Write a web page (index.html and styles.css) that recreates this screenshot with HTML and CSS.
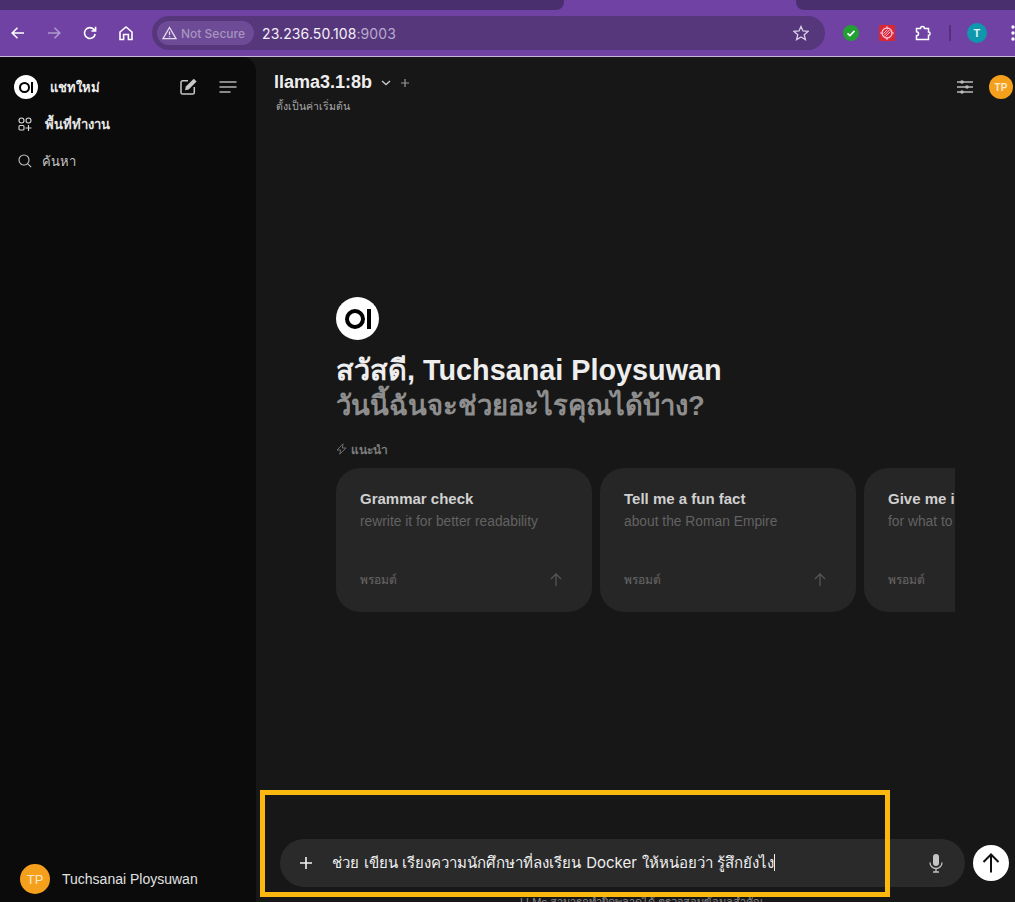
FILE: index.html
```html
<!DOCTYPE html>
<html lang="th">
<head>
    <meta charset="utf-8">
    <title>Open WebUI</title>
    <link rel="stylesheet" href="styles.css">
</head>
<body>
<div class="tabstrip">
    <div class="tabslot tabslot-left"></div>
    <div class="tabslot tabslot-right"></div>
</div>
<div class="toolbar">
    <button class="navbtn">
        <svg width="18" height="18" viewBox="0 0 18 18"><path d="M15 9H3.500M8.500 3.800 3.200 9l5.300 5.200" class="ic"/></svg>
    </button>
    <button class="navbtn navbtn-off">
        <svg width="18" height="18" viewBox="0 0 18 18"><path d="M3 9h11.500M9.500 3.800 14.800 9l-5.300 5.200" class="ic"/></svg>
    </button>
    <button class="navbtn">
        <svg width="18" height="18" viewBox="0 0 18 18"><path d="M14.200 10a5.400 5.400 0 1 1-1.300-4.600L14.600 7M14.600 2.800V7h-4.200" class="ic"/></svg>
    </button>
    <button class="navbtn">
        <svg width="18" height="18" viewBox="0 0 18 18"><path d="M3 15.500V8l6-5 6 5v7.500h-3.600v-5H6.600v5z" class="ic"/></svg>
    </button>
    <div class="omnibox">
        <div class="secure-chip">
            <svg width="15" height="14" viewBox="0 0 15 14"><path d="M7.500 1.500 14 12.600H1zM7.500 5.500v3.600M7.500 10.200v1" fill="none" stroke="#e6dcf2" stroke-width="1.300"/></svg>
            <span>Not Secure</span>
        </div>
        <div class="url">23.236.50.108<span class="url-port">:9003</span></div>
        <svg class="star" width="16" height="16" viewBox="0 0 16 16"><path d="m8 1.400 2 4.600 5 .4-3.800 3.300 1.200 4.900L8 12l-4.400 2.600 1.200-4.900L1 6.400l5-.4z" fill="none" stroke="#d9cde8" stroke-width="1.300"/></svg>
    </div>
    <div class="extensions">
        <svg width="16" height="16" viewBox="0 0 16 16"><circle cx="8" cy="8" r="8" fill="#23a033"/><path d="m4.500 8.300 2.400 2.300 4.600-4.700" fill="none" stroke="#fff" stroke-width="1.600"/></svg>
        <svg width="16" height="16" viewBox="0 0 16 16"><rect width="16" height="16" rx="1.500" fill="#d9282f"/><circle cx="8" cy="8" r="5" fill="none" stroke="#fbd" stroke-width="1.300"/><path d="M5 10.500 10.500 5M6.500 11.500l5-5M4.500 8.500l4-4M8 1v3M8 12v3M1 8h3M12 8h3" stroke="#fbd" stroke-width="1"/></svg>
        <svg width="17" height="17" viewBox="0 0 17 17"><path d="M1.500 3.500h4a2 2 0 0 1 4 0h4v3.600a1.600 1.600 0 0 1 0 3.200v4.200h-12v-3.700a2 2 0 0 0 0-4z" fill="none" stroke="#fff" stroke-width="1.500"/></svg>
        <div class="ext-divider"></div>
        <div class="profile-dot">T</div>
        <svg class="dots" width="4" height="16" viewBox="0 0 4 16"><circle cx="2" cy="2" r="1.700" fill="#fff"/><circle cx="2" cy="8" r="1.700" fill="#fff"/><circle cx="2" cy="14" r="1.700" fill="#fff"/></svg>
    </div>
</div>
<div class="app">
    <aside class="sidebar">
        <div class="side-top">
            <div class="logo-small"><span class="oi-o"></span><span class="oi-i"></span></div>
            <span class="newchat">แชทใหม่</span>
            <svg class="side-ic" width="18" height="18" viewBox="0 0 18 18"><path d="M9 2.700H3.600A1.600 1.600 0 0 0 2 4.300v10.100A1.600 1.600 0 0 0 3.600 16h10.100a1.600 1.600 0 0 0 1.600-1.600V9" fill="none" stroke="#c8c8c8" stroke-width="1.500"/><path d="M14.800 .8 17.600 3.600 9.700 11.500l-3.700.8.800-3.700z" fill="#c8c8c8"/></svg>
            <svg class="side-ic side-ic-last" width="18" height="14" viewBox="0 0 18 14"><path d="M1 2h16M1 7h16M1 12h10" fill="none" stroke="#b4b4b4" stroke-width="1.500" stroke-linecap="round"/></svg>
        </div>
        <div class="side-item side-workspace">
            <svg width="14" height="14" viewBox="0 0 14 14"><g fill="none" stroke="#d8d8d8" stroke-width="1.100"><circle cx="3.500" cy="3.500" r="2.500"/><circle cx="10.500" cy="3.500" r="2.500"/><rect x="1" y="8.500" width="5" height="4.500" rx="1"/><path d="M10.500 8v6M7.500 11h6"/></g></svg>
            <span>พื้นที่ทำงาน</span>
        </div>
        <div class="side-item side-search">
            <svg width="14" height="14" viewBox="0 0 14 14"><circle cx="6" cy="6" r="5" fill="none" stroke="#c4c4c4" stroke-width="1.100"/><path d="m9.800 9.800 3.400 3.400" stroke="#c4c4c4" stroke-width="1.100"/></svg>
            <span>ค้นหา</span>
        </div>
        <div class="side-user">
            <div class="avatar avatar-big">TP</div>
            <span>Tuchsanai Ploysuwan</span>
        </div>
    </aside>
    <main class="chat">
        <header class="chat-head">
            <div class="model">
                <div class="model-row">
                    <span class="model-name">llama3.1:8b</span>
                    <svg width="10" height="6" viewBox="0 0 10 6"><path d="m1 1 4 3.600L9 1" fill="none" stroke="#ccc" stroke-width="1.300"/></svg>
                    <svg class="model-plus" width="8" height="8" viewBox="0 0 8 8"><path d="M4 0v8M0 4h8" stroke="#999" stroke-width="1.200"/></svg>
                </div>
                <div class="model-default">ตั้งเป็นค่าเริ่มต้น</div>
            </div>
            <svg class="head-sliders" width="16" height="14" viewBox="0 0 16 14"><g stroke="#bbb" stroke-width="1.300"><path d="M0 2h16M0 7h16M0 12h16"/></g><g fill="#bbb"><circle cx="5" cy="2" r="1.800"/><circle cx="10" cy="7" r="1.800"/><circle cx="5" cy="12" r="1.800"/></g></svg>
            <div class="avatar avatar-head">TP</div>
        </header>
        <section class="hero">
            <div class="logo-big"><span class="oi-o"></span><span class="oi-i"></span></div>
            <h1 class="hello">สวัสดี, Tuchsanai Ploysuwan</h1>
            <div class="hello-sub">วันนี้ฉันจะช่วยอะไรคุณได้บ้าง?</div>
            <div class="suggest-label">
                <svg width="11" height="12" viewBox="0 0 11 12"><path d="M7 .8 1 7h3.600L3.800 11.200 10 5H6.400z" fill="none" stroke="#6e6e6e" stroke-width="1"/></svg>
                <span>แนะนำ</span>
            </div>
            <div class="cards">
                <div class="card">
                    <div class="card-title">Grammar check</div>
                    <div class="card-sub">rewrite it for better readability</div>
                    <div class="card-foot">
                        <span>พรอมต์</span>
                        <svg width="12" height="13" viewBox="0 0 12 13"><path d="M6 13V1M1 6l5-5 5 5" fill="none" stroke="#555" stroke-width="1.300"/></svg>
                    </div>
                </div>
                <div class="card">
                    <div class="card-title">Tell me a fun fact</div>
                    <div class="card-sub">about the Roman Empire</div>
                    <div class="card-foot">
                        <span>พรอมต์</span>
                        <svg width="12" height="13" viewBox="0 0 12 13"><path d="M6 13V1M1 6l5-5 5 5" fill="none" stroke="#555" stroke-width="1.300"/></svg>
                    </div>
                </div>
                <div class="card">
                    <div class="card-title">Give me ideas</div>
                    <div class="card-sub">for what to do with my kids' art</div>
                    <div class="card-foot">
                        <span>พรอมต์</span>
                        <svg width="12" height="13" viewBox="0 0 12 13"><path d="M6 13V1M1 6l5-5 5 5" fill="none" stroke="#555" stroke-width="1.300"/></svg>
                    </div>
                </div>
            </div>
        </section>
        <div class="composer">
            <div class="inputbar">
                <svg width="12" height="12" viewBox="0 0 12 12"><path d="M6 0v12M0 6h12" stroke="#f2f2f2" stroke-width="1.600"/></svg>
                <div class="inputtext">ช่วย เขียน เรียงความนักศึกษาที่ลงเรียน Docker ให้หน่อยว่า รู้สึกยังไง<span class="caret"></span></div>
                <svg width="14" height="19" viewBox="0 0 14 19"><rect x="4" y="0" width="6" height="12" rx="3" fill="#c4c4c4"/><path d="M1 8.500a6 6 0 0 0 12 0M7 14.500V18M4 18h6" fill="none" stroke="#c4c4c4" stroke-width="1.300"/></svg>
            </div>
            <button class="sendbtn">
                <svg width="18" height="20" viewBox="0 0 18 20"><path d="M9 19.500V1.500M1.500 9 9 1.500 16.500 9" fill="none" stroke="#111" stroke-width="2"/></svg>
            </button>
        </div>
        <div class="disclaimer">LLMs สามารถทำผิดพลาดได้ ตรวจสอบข้อมูลสำคัญ</div>
    </main>
</div>
<div class="highlight"></div>
</body>
</html>
```

FILE: styles.css
```css
* {
    box-sizing: border-box;
}

html, body {
    margin: 0;
    height: 902px;
    overflow: hidden;
}

body {
    display: flex;
    flex-direction: column;
    position: relative;
    background-color: #171717;
    font-family: Inter, "Noto Sans", "Liberation Sans", "DejaVu Sans", sans-serif;
    color: #eee;
}

button {
    border: 0;
    padding: 0;
    background: none;
}

/* browser chrome */
.tabstrip {
    height: 10px;
    background-color: #6f42a4;
    display: flex;
}

.tabslot {
    height: 10px;
    background-color: #4a2f6e;
}

.tabslot-left {
    width: 564px;
    border-bottom-right-radius: 8px;
}

.tabslot-right {
    width: 219px;
    margin-left: 232px;
    border-bottom-left-radius: 8px;
}

.toolbar {
    height: 47px;
    display: flex;
    align-items: center;
    background-color: #6f42a4;
    border-bottom: 1px solid #c9b8dc;
    padding-left: 9px;
}

.navbtn {
    width: 18px;
    height: 18px;
    margin-right: 18px;
    display: flex;
}

.navbtn-off {
    opacity: 0.45;
}

.ic {
    fill: none;
    stroke: #fff;
    stroke-width: 1.600;
}

.omnibox {
    width: 676px;
    height: 34px;
    margin-left: -1px;
    padding: 0 16px 0 5px;
    border-radius: 17px;
    background-color: #56377c;
    display: flex;
    align-items: center;
}

.secure-chip {
    height: 24px;
    padding: 0 9px 0 5px;
    border-radius: 12px;
    background-color: #6d4b96;
    display: flex;
    align-items: center;
    gap: 4px;
    font-size: 12px;
    font-weight: 500;
    color: #a795bf;
}

.url {
    margin-left: 8px;
    font-size: 14px;
    letter-spacing: 0.1px;
    color: #f4eff9;
    flex: 1;
}

.url-port {
    color: #b9a9cd;
}

.extensions {
    display: flex;
    align-items: center;
    margin-left: 18px;
}

.extensions > svg {
    margin-right: 20px;
}

.ext-divider {
    width: 2px;
    height: 16px;
    margin-left: -3px;
    background-color: #54307f;
    margin-right: 16px;
}

.profile-dot {
    width: 20px;
    height: 20px;
    border-radius: 50%;
    background-color: #0f97ad;
    color: #e5fbff;
    font-size: 11px;
    font-weight: 600;
    display: flex;
    align-items: center;
    justify-content: center;
    margin-right: 24px;
}

.extensions > .dots {
    margin-right: 0;
}

/* app */
.app {
    flex: 1;
    min-height: 0;
    display: flex;
    font-family: "Liberation Sans", "Noto Sans", "DejaVu Sans", sans-serif;
}

.sidebar {
    width: 256px;
    flex: none;
    background-color: #0b0b0b;
    border-top-right-radius: 14px;
    display: flex;
    flex-direction: column;
    padding: 18px 0 0 14px;
}

.side-top {
    display: flex;
    align-items: center;
    height: 24px;
}

.logo-small, .logo-big {
    background-color: #fff;
    border-radius: 50%;
    display: flex;
    align-items: center;
    justify-content: center;
}

.logo-small {
    width: 24px;
    height: 24px;
    gap: 1.500px;
}

.logo-small .oi-o {
    width: 11px;
    height: 11px;
    border: 2.500px solid #000;
    border-radius: 50%;
}

.logo-small .oi-i {
    width: 2px;
    height: 11px;
    background-color: #000;
}

.newchat {
    margin-left: 12px;
    font-size: 13px;
    font-weight: 700;
    color: #eee;
    flex: 1;
}

.side-ic {
    margin-right: 22px;
}

.side-ic-last {
    margin-right: 19px;
}

.side-item {
    display: flex;
    align-items: center;
}

.side-workspace {
    margin: 13px 0 0 4px;
    gap: 13px;
    font-size: 13px;
    font-weight: 700;
    color: #e6e6e6;
    height: 24px;
}

.side-search {
    margin: 13px 0 0 4px;
    gap: 10px;
    font-size: 13px;
    color: #c4c4c4;
    height: 24px;
}

.side-user {
    margin-top: auto;
    margin-bottom: 8px;
    margin-left: 6px;
    display: flex;
    align-items: center;
    gap: 12px;
    font-size: 14px;
    color: #e0e0e0;
}

.avatar {
    border-radius: 50%;
    background-color: #f5a01c;
    color: #fde9c9;
    display: flex;
    align-items: center;
    justify-content: center;
    font-weight: 500;
}

.avatar-big {
    width: 30px;
    height: 30px;
    font-size: 13px;
}

.avatar-head {
    width: 24px;
    height: 24px;
    font-size: 10px;
    font-weight: 700;
    margin: 3px 0 0 16px;
}

.chat {
    flex: 1;
    min-width: 0;
    display: flex;
    flex-direction: column;
    background-color: #171717;
}

.chat-head {
    flex: none;
    display: flex;
    align-items: flex-start;
    padding: 15px 2px 0 18px;
    height: 60px;
}

.head-sliders {
    margin-top: 8px;
}

.model {
    flex: 1;
}

.model-row {
    display: flex;
    align-items: center;
    gap: 9px;
}

.model-name {
    font-size: 18px;
    font-weight: 700;
    color: #eee;
}

.model-row svg.model-plus {
    margin-left: 1px;
}

.model-default {
    font-size: 10.500px;
    color: #aaa;
    margin: 5px 0 0 2px;
}

.hero {
    flex: none;
    padding-left: 80px;
    margin-top: 180px;
    height: 542px;
    overflow: hidden;
}

.logo-big {
    width: 43px;
    height: 43px;
    gap: 2.500px;
}

.logo-big .oi-o {
    width: 20px;
    height: 20px;
    border: 4px solid #000;
    border-radius: 50%;
}

.logo-big .oi-i {
    width: 3.500px;
    height: 20px;
    background-color: #000;
}

.hello {
    margin: 12px 0 0;
    font-size: 28.800px;
    font-weight: 700;
    line-height: 36px;
    color: #eee;
}

.hello-sub {
    font-size: 27.400px;
    font-weight: 700;
    line-height: 36px;
    color: #8e8e8e;
}

.suggest-label {
    margin-top: 16px;
    display: flex;
    align-items: center;
    gap: 4px;
    font-size: 12px;
    font-weight: 700;
    color: #7c7c7c;
    height: 18px;
}

.cards {
    margin-top: 10px;
    width: 619px;
    display: flex;
    gap: 8px;
    overflow: hidden;
}

.card {
    flex: none;
    width: 256px;
    height: 144px;
    border-radius: 24px;
    background-color: #262626;
    padding: 22px 24px 0;
    display: flex;
    flex-direction: column;
    white-space: nowrap;
}

.card-title {
    font-size: 15px;
    font-weight: 700;
    color: #d0d0d0;
}

.card-sub {
    margin-top: 7px;
    font-size: 13.800px;
    color: #626262;
}

.card-foot {
    margin-top: auto;
    margin-bottom: 23px;
    display: flex;
    justify-content: space-between;
    align-items: center;
    font-size: 12px;
    color: #666;
    padding-right: 6px;
}

.composer {
    flex: none;
    display: flex;
    align-items: center;
    gap: 8px;
    padding-left: 24px;
}

.inputbar {
    width: 685px;
    height: 48px;
    border-radius: 24px;
    background-color: #2a2a2a;
    display: flex;
    align-items: center;
    padding: 0 22px 0 20px;
}

.inputtext {
    flex: 1;
    margin-left: 20px;
    font-family: Inter, "Noto Sans", sans-serif;
    font-size: 15px;
    word-spacing: 0.5px;
    color: #f0f0f0;
    white-space: nowrap;
}

.caret {
    display: inline-block;
    width: 1px;
    height: 17px;
    background-color: #eee;
    vertical-align: -3px;
}

.sendbtn {
    width: 36px;
    height: 36px;
    border-radius: 50%;
    background-color: #fff;
    display: flex;
    align-items: center;
    justify-content: center;
}

.disclaimer {
    flex: none;
    margin-top: 6px;
    padding-left: 264px;
    font-size: 11px;
    color: #8a8a8a;
    white-space: nowrap;
}

/* annotation drawn over the screenshot */
.highlight {
    position: absolute;
    left: 260px;
    top: 790px;
    width: 630px;
    height: 107px;
    border: 5px solid #fbb80f;
}
```
